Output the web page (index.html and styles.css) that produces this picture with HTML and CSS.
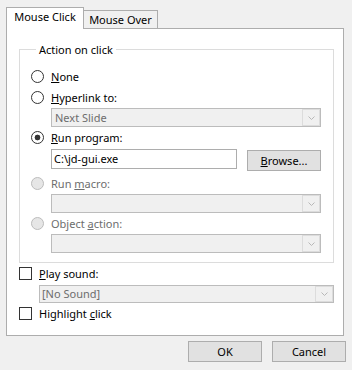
FILE: index.html
```html
<!DOCTYPE html>
<html>
<head>
<meta charset="utf-8">
<title>Action Settings</title>
<link rel="stylesheet" href="styles.css">
</head>
<body>
<div class="dialog">
  <div class="tabs">
    <div class="tab active">Mouse Click</div>
    <div class="tab">Mouse Over</div>
  </div>
  <div class="pane">
    <fieldset class="group">
      <legend>Action on click</legend>
      <div class="row"><span class="radio"></span><span class="label"><u>N</u>one</span></div>
      <div class="row"><span class="radio"></span><span class="label"><u>H</u>yperlink to:</span></div>
      <div class="select indent"><span class="value">Next Slide</span><span class="arrow"><svg width="7" height="4" viewBox="0 0 7 4"><polyline points="0.5,0.5 3.5,3.5 6.5,0.5" fill="none" stroke="#b8b8b8" stroke-width="1"/></svg></span></div>
      <div class="row"><span class="radio checked"></span><span class="label"><u>R</u>un program:</span></div>
      <div class="program indent">
        <div class="input">C:\jd-gui.exe</div>
        <div class="button browse"><u>B</u>rowse...</div>
      </div>
      <div class="row disabled spaced"><span class="radio"></span><span class="label">Run <u>m</u>acro:</span></div>
      <div class="select indent"><span class="value"></span><span class="arrow"><svg width="7" height="4" viewBox="0 0 7 4"><polyline points="0.5,0.5 3.5,3.5 6.5,0.5" fill="none" stroke="#b8b8b8" stroke-width="1"/></svg></span></div>
      <div class="row disabled"><span class="radio"></span><span class="label">Object <u>a</u>ction:</span></div>
      <div class="select indent"><span class="value"></span><span class="arrow"><svg width="7" height="4" viewBox="0 0 7 4"><polyline points="0.5,0.5 3.5,3.5 6.5,0.5" fill="none" stroke="#b8b8b8" stroke-width="1"/></svg></span></div>
    </fieldset>
    <div class="row"><span class="check"></span><span class="label"><u>P</u>lay sound:</span></div>
    <div class="select indent sound"><span class="value">[No Sound]</span><span class="arrow"><svg width="7" height="4" viewBox="0 0 7 4"><polyline points="0.5,0.5 3.5,3.5 6.5,0.5" fill="none" stroke="#b8b8b8" stroke-width="1"/></svg></span></div>
    <div class="row"><span class="check"></span><span class="label">Highlight <u>c</u>lick</span></div>
  </div>
  <div class="actions">
    <div class="button">OK</div>
    <div class="button">Cancel</div>
  </div>
</div>
</body>
</html>
```
FILE: styles.css
```css
html, body {
  margin: 0;
  background: #f0f0f0;
}
body {
  font-family: "Noto Sans", "Open Sans", sans-serif;
  font-size: 11px;
  color: #000;
}
u {
  text-decoration: underline;
  text-underline-offset: 1px;
}
.dialog {
  width: 352px;
  height: 370px;
  padding-top: 7px;
  box-sizing: border-box;
}
.tabs {
  display: flex;
  align-items: flex-end;
  height: 21px;
  margin-left: 6px;
}
.tab {
  box-sizing: border-box;
  width: 74px;
  height: 18px;
  border: 1px solid #adadad;
  border-left: none;
  border-bottom: none;
  background: #f0f0f0;
  text-align: center;
  line-height: 17px;
}
.tab.active {
  width: 78px;
  height: 22px;
  border-left: 1px solid #adadad;
  background: #fff;
  line-height: 18px;
  margin-bottom: -1px;
  position: relative;
  z-index: 1;
}
.pane {
  box-sizing: border-box;
  width: 338px;
  height: 308px;
  margin-left: 6px;
  border: 1px solid #adadad;
  background: #fff;
  padding: 12px 0 0 12px;
  display: flex;
  flex-direction: column;
}
.group {
  margin: 0;
  width: 315px;
  min-inline-size: 0;
  box-sizing: border-box;
  border: 1px solid #dcdcdc;
  padding: 8px 12px 9px 11px;
}
.group legend {
  padding: 0 3px;
  margin-left: 5px;
  line-height: 17px;
}
.row {
  display: flex;
  align-items: center;
  height: 21px;
}
.row.spaced {
  margin-top: 2px;
}
.row .label {
  margin-left: 7px;
}
.row.disabled {
  color: #6d6d6d;
}
.radio {
  flex: none;
  box-sizing: border-box;
  width: 13px;
  height: 13px;
  border: 1px solid #333;
  border-radius: 50%;
  background: #fff;
}
.radio.checked {
  background: radial-gradient(circle, #333 0 2.6px, #fff 3.2px);
}
.row.disabled .radio {
  border-color: #bcbcbc;
  background: #e6e6e6;
}
.check {
  flex: none;
  box-sizing: border-box;
  width: 13px;
  height: 13px;
  border: 1px solid #333;
  background: #fff;
}
.indent {
  margin-left: 20px;
}
.select {
  display: flex;
  box-sizing: border-box;
  width: 270px;
  height: 19px;
  border: 1px solid #bcbcbc;
  background: #f0f0f0;
  color: #6d6d6d;
}
.select .value {
  flex: 1;
  padding-left: 3px;
  line-height: 17px;
}
.select .arrow {
  box-sizing: border-box;
  width: 18px;
  border: 1px solid #dcdcdc;
  display: flex;
  align-items: center;
  justify-content: center;
}
.select.sound {
  width: 295px;
  height: 18px;
  margin-top: 1px;
}
.select.sound .value {
  padding-left: 2px;
  line-height: 16px;
}
.program {
  display: flex;
  justify-content: space-between;
  width: 270px;
  height: 22px;
  margin-top: 1px;
}
.input {
  box-sizing: border-box;
  width: 186px;
  height: 20px;
  border: 1px solid #adadad;
  background: #fff;
  padding-left: 2px;
  line-height: 18px;
}
.button {
  box-sizing: border-box;
  width: 74px;
  height: 21px;
  border: 1px solid #adadad;
  background: #e1e1e1;
  text-align: center;
  line-height: 19px;
}
.button.browse {
  margin-top: 1px;
}
.actions {
  display: flex;
  justify-content: flex-end;
  gap: 10px;
  padding-right: 6px;
  margin-top: 5px;
}
```
